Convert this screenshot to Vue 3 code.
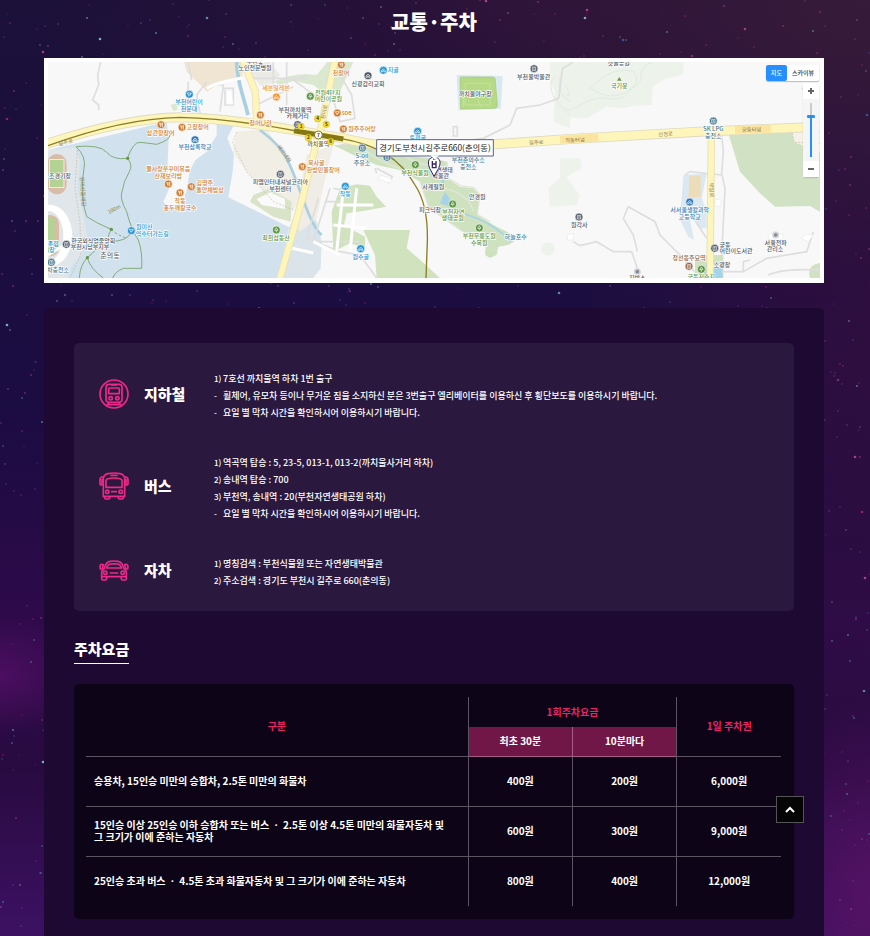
<script setup>
import { ref } from 'vue'

const zoom = ref(76)
const mapType = ref('map')

const guides = [
  {
    id: 'subway',
    title: '지하철',
    lines: [
      ['1)', '7호선 까치울역 하차 1번 출구'],
      ['-', '휠체어, 유모차 등이나 무거운 짐을 소지하신 분은 3번출구 엘리베이터를 이용하신 후 횡단보도를 이용하시기 바랍니다.'],
      ['-', '요일 별 막차 시간을 확인하시어 이용하시기 바랍니다.'],
    ],
  },
  {
    id: 'bus',
    title: '버스',
    lines: [
      ['1)', '역곡역 탑승 : 5, 23-5, 013-1, 013-2(까치울사거리 하차)'],
      ['2)', '송내역 탑승 : 700'],
      ['3)', '부천역, 송내역 : 20(부천자연생태공원 하차)'],
      ['-', '요일 별 막차 시간을 확인하시어 이용하시기 바랍니다.'],
    ],
  },
  {
    id: 'car',
    title: '자차',
    lines: [
      ['1)', '명칭검색 : 부천식물원 또는 자연생태박물관'],
      ['2)', '주소검색 : 경기도 부천시 길주로 660(춘의동)'],
    ],
  },
]

const fees = [
  ['승용차, 15인승 미만의 승합차, 2.5톤 미만의 화물차', '400원', '200원', '6,000원'],
  ['15인승 이상 25인승 이하 승합차 또는 버스 ㆍ 2.5톤 이상 4.5톤 미만의 화물자동차 및 그 크기가 이에 준하는 자동차', '600원', '300원', '9,000원'],
  ['25인승 초과 버스 ㆍ 4.5톤 초과 화물자동차 및 그 크기가 이에 준하는 자동차', '800원', '400원', '12,000원'],
]

// Map labels: x, y (baseline), text, tone
const labels = [
  [645, 28, '부천숲', 'dark'], [645, 46, '노인전문병원', 'dark'],
  [447, 148, '부천어린이', 'blue'], [447, 169, '천문대', 'blue'],
  [362, 240, '삼관향장어', 'food'], [473, 223, '고창장어', 'food'],
  [465, 282, '부천삼록학교', 'school'],
  [385, 348, '쭐사랑쭈꾸미볶음', 'food'], [385, 368, '산재보리밥', 'food'],
  [494, 391, '김명주', 'food'], [510, 411, '돌안채밥상', 'food'],
  [420, 444, '작동', 'food'], [420, 464, '홍두깨칼국수', 'food'],
  [313, 523, '원미산', 'blue'], [337, 543, '약수터가는길', 'blue'],
  [160, 563, '한국외식업중앙회', 'dark'], [150, 583, '부천시남부지부', 'dark'],
  [52, 370, '보조경기장', 'dark'], [40, 572, '종합', 'blue'], [36, 590, '장', 'blue'],
  [54, 651, '차충전소', 'teal'],
  [708, 106, '세븐일레븐', 'orange'], [765, 170, '부천까치울역', 'dark'], [773, 190, '카페거리', 'dark'],
  [662, 210, '장어나라', 'food'],
  [721, 387, '피엠인터내셔널코리아', 'dark'], [721, 408, '부천센터', 'dark'],
  [708, 555, '최희섭동산', 'green'],
  [903, 60, '천장어', 'food'], [1060, 51, '지골', 'blue'], [984, 92, '신광감리교회', 'dark'],
  [863, 119, '전원4단지', 'green'], [865, 138, '어린이공원', 'green'],
  [920, 181, 'soe', 'food'], [966, 228, '원주추어탕', 'food'],
  [835, 272, '까치울역', 'olive'],
  [829, 331, '복사골', 'food'], [850, 351, '한방민물장어', 'food'],
  [966, 310, 'S-oil', 'teal'], [966, 329, '주유소', 'teal'],
  [916, 422, '작동', 'blue'], [962, 612, '원수골', 'blue'],
  [1481, 72, '부천물박물관', 'dark'], [1306, 124, '까치울야구장', 'dark'],
  [1133, 255, '토끼골', 'blue'],
  [1285, 322, '부천춘의수소', 'teal'], [1285, 341, '충전소', 'teal'],
  [1125, 360, '부천식물원', 'green'], [1205, 350, '자연생태', 'park'], [1202, 368, '박물관', 'park'],
  [1180, 401, '사계절원', 'dark'], [1312, 432, '안경원', 'dark'], [1170, 472, '피크닉장', 'dark'],
  [1240, 476, '부천자연', 'green'], [1238, 496, '생태공원', 'green'],
  [1318, 550, '부천무릉도원', 'green'], [1318, 570, '수목원', 'green'],
  [1427, 553, '하늘호수', 'lake'],
  [1736, 29, '갯골공원', 'dark'], [1738, 99, '국기봉', 'green'],
  [2020, 229, 'SK LPG', 'teal'], [2020, 248, '충전소', 'teal'],
  [1949, 471, '서서울생활과학', 'school'], [1949, 491, '고등학교', 'school'],
  [1618, 516, '원각사', 'dark'], [2055, 576, '궁동', 'dark'], [2088, 595, '어린이도서관', 'dark'],
  [2207, 570, '서울전파', 'dark'], [2205, 589, '관리소', 'dark'],
  [1947, 615, '정선옹주묘역', 'brown'], [2046, 637, '소광장', 'dark'], [1984, 672, '궁동저수지', 'green'],
  [1792, 674, '지박스', 'dark'],
]
const roadNames = [
  [78, 268, '길주로', -12], [1489, 268, '길주로', -3], [1605, 261, '작동터널', -2],
  [1877, 243, '신정로', -3], [2135, 230, '궁동터널', -2], [728, 300, '베르네천', 54],
  [225, 468, '100m', -28], [2009, 405, '부일로', 88], [858, 172, '원미로', -76], [123, 410, '원미산둘레길', 86],
]
const pins = [
  [448, 118, 'blue', 'cup'], [363, 209, 'food', 'fork'], [426, 217, 'food', 'fork'], [465, 254, 'school', 'house'],
  [385, 387, 'food', 'fork'], [454, 395, 'food', 'fork'], [420, 413, 'food', 'fork'], [274, 527, 'blue', 'cup'],
  [79, 568, 'dark', 'build'], [34, 622, 'teal', 'build'], [709, 126, 'orange', 'house'], [661, 180, 'food', 'fork'],
  [773, 209, 'dark', 'build'], [721, 358, 'dark', 'build'], [787, 335, 'food', 'fork'], [709, 525, 'green', 'tree'],
  [811, 124, 'green', 'tree'], [904, 29, 'food', 'fork'], [984, 62, 'dark', 'house'], [1030, 46, 'blue', 'house'],
  [892, 174, 'food', 'cup'], [910, 222, 'food', 'fork'], [967, 279, 'teal', 'build'], [1041, 307, 'teal', 'build'],
  [916, 394, 'blue', 'house'], [962, 581, 'blue', 'house'], [1482, 41, 'dark', 'build'], [1133, 229, 'blue', 'house'],
  [1126, 329, 'green', 'tree'], [1238, 447, 'green', 'tree'], [1318, 519, 'green', 'tree'],
  [2020, 198, 'teal', 'build'], [1949, 441, 'school', 'house'], [1617, 486, 'dark', 'build'],
  [2024, 580, 'dark', 'build'], [1947, 634, 'brown', 'build'], [1984, 643, 'green', 'tree'],
]
const glyphs = {
  fork: 'M-4-6V-2Q-4 1-1 1V-6M-1 0V7M4 7V-6Q1-4 4 1',
  house: 'M-6 5V1L0-5L6 1V5H2V1H-2V5Z',
  cup: 'M-6-4H5L3 2H-3ZM-1 2V6M5-3H7',
  build: 'M-5 6V-5H5V6ZM-2-2H2M-2 2H2',
  tree: 'M0-7L5 1H-5ZM0 1V7',
}
const exits = [[783, 214, '1'], [833, 191, '4'], [859, 208, '5'], [805, 248, '2'], [872, 260, '6']]

// Deterministic star field, so that every load draws the same sky
const tones = ['#5f9fc0', '#b7418f', '#8a2d87', '#3f58a5', '#a52465', '#7fd0d8', '#c0499b']
let seed = 41
const rand = () => (seed = (seed * 16807) % 2147483647) / 2147483647
const stars = Array.from({ length: 1500 }, () => {
  const bright = rand() > 0.94
  return {
    x: Math.round(rand() * 870),
    y: Math.round(rand() * 936),
    r: bright ? 1.3 : 0.9,
    o: bright ? 0.85 : 0.2 + rand() * 0.4,
    c: tones[Math.floor(rand() * tones.length)],
  }
})

const toTop = () => window.scrollTo({ top: 0, behavior: 'smooth' })
</script>

<template>
  <div class="page">
    <svg class="sky" viewBox="0 0 870 936" preserveAspectRatio="xMidYMin slice" aria-hidden="true">
      <circle v-for="(s, i) in stars" :key="i" :cx="s.x" :cy="s.y" :r="s.r" :fill="s.c" :opacity="s.o" />
    </svg>

    <h1>교통·주차</h1>

    <section class="map">
      <svg class="map-art" viewBox="24 21 2316 648" role="img" aria-label="지도">
        <rect x="24" y="21" width="2316" height="648" fill="#f8f8f8" />
        <!-- hills and forest -->
        <path fill="#d1e2ee" d="M24 285L380 200 386 250 382 345 388 400 370 440 385 456 425 450 442 400 448 350 466 315 500 290 530 240 530 205 580 212 562 250 582 300 578 350 565 427 748 517 712 669H24Z" />
        <path fill="#e0e6ea" d="M24 285L106 277 120 320 112 400 130 480 140 540 124 600 90 640 82 669H24Z" />
        <path fill="#dbe4ea" d="M748 517L790 430 830 500 845 560 842 640 820 669H712Z" />
        <path fill="#f1eee5" d="M590 230L680 222 735 300 765 380 790 425 760 465 700 440 620 350 578 290Z" />
        <path fill="#d9e3c8" d="M640 420L690 400 720 420 755 440 752 500 700 485 630 440Z" />
        <path fill="#fafafa" d="M650 432L690 412 735 432 735 462 665 450Z" />
        <path fill="#f0e5d2" d="M432 21H608V66L545 82 500 110 480 88 440 50Z" />
        <path fill="#eceae4" d="M600 21H690L720 60 680 100 660 90Z" />
        <path fill="#d9e8cf" d="M700 80Q760 50 830 60L862 21H940L900 110 860 120 820 90 760 78 720 90ZM392 150L412 143V165L400 168Z" />
        <path fill="#f0ede6" d="M800 300L880 270 860 350 830 490 780 530 760 500Z" />
        <path fill="#d1e2bf" d="M950 388L990 392 1010 425 1038 455 970 468 920 475 912 510 975 545 975 580 930 565 880 590 875 470 900 400ZM970 525H1110L1100 580 1135 610 1200 669H1010L1005 600Z" />
        <path fill="#cfe2c0" d="M880 270H1000L1060 300 1180 310 1220 320 1222 370 1260 395 1300 400 1320 420 1312 480 1370 515 1410 535 1440 548 1405 570 1375 575 1370 600 1350 609 1335 600 1338 565 1280 540 1200 480 1165 455 1140 380 1080 345 1010 330 940 300Z" />
        <path fill="#edf3eb" d="M1560 21H1930L1930 60 1880 70 1838 95 1835 150 1780 152 1750 160 1700 155 1640 190 1560 185ZM1560 310L1620 310 1625 340 1580 365 1600 395 1620 420 1610 450 1530 455 1525 400 1560 370Z" />
        <path fill="#edf3eb" d="M1530 21H1590V220L1540 200 1545 110 1530 80Z" />
        <ellipse cx="1524" cy="582" rx="20" ry="20" fill="#edf3eb" />
        <path fill="#d1e2c4" d="M2065 235L2260 228 2292 235 2340 238V470L2310 453 2205 455 2160 415 2100 350Z" />
        <path fill="#f5f1e8" d="M2255 228H2340V290L2262 262Z" />
        <path fill="#d1e2c4" d="M2340 624Q2298 630 2310 669H2340ZM1980 600H2050V669H1965V620Z" />
        <path fill="#dbe8f1" d="M1930 360L2000 355 1985 430 2000 470 2000 520H1980L1965 490 1950 495 1962 555 1945 545 1918 490 1925 430Z" />
        <path fill="#ecdcb9" d="M1948 362H1982V425L1945 428Z" />
        <path fill="#a5d3ea" d="M1998 625H2048V669H1990ZM1200 445L1215 410 1228 430 1230 455ZM1202 370H1215L1208 395ZM1392 540L1440 545 1410 560Z" />
        <path fill="none" stroke="#a5d3ea" stroke-width="5" d="M1235 460Q1280 480 1310 490T1400 545" />
        <path fill="none" stroke="#e1eae0" stroke-width="3" d="M1575 160C1600 180 1640 120 1700 130S1760 110 1790 90 1780 40 1840 21M1650 100Q1710 140 1760 110T1780 50Q1720 30 1650 100M1575 90Q1600 130 1580 120M1550 60Q1500 100 1590 180M1565 50Q1540 110 1590 140" />
        <!-- sports grounds -->
        <rect x="22" y="297" width="58" height="121" rx="29" fill="#d8bca7" />
        <rect x="28" y="314" width="44" height="84" fill="#b4d294" stroke="#fff" stroke-width="2" />
        <path stroke="#fff" stroke-width="2" d="M28 356H72" />
        <ellipse cx="28" cy="542" rx="70" ry="94" fill="#fff" stroke="#dfe3e6" stroke-width="2" />
        <ellipse cx="26" cy="542" rx="44" ry="74" fill="#e1e5e8" />
        <rect x="4" y="480" width="53" height="124" rx="26" fill="#d8bca7" />
        <rect x="8" y="488" width="36" height="104" fill="#b4d294" />
        <path fill="#d8e7f0" d="M1250 60L1388 63 1382 161 1256 166Z" />
        <path fill="#b5d984" stroke="#a0ca73" stroke-width="2" d="M1260 70Q1260 65 1266 66L1360 66Q1368 70 1366 80L1372 150Q1372 160 1362 160L1262 162Z" />
        <path fill="none" stroke="#cfe7ae" stroke-width="2" d="M1275 85H1350V150H1275ZM1270 155V105Q1310 110 1322 155" />
        <!-- creeks -->
        <path fill="none" stroke="#a9cfe0" stroke-width="11" d="M590 21C590 80 610 120 624 180" />
        <path fill="none" stroke="#a9cfe0" stroke-width="8" d="M660 225Q720 270 740 310T790 435 845 540" />
        <!-- lanes -->
        <g fill="none" stroke="#dedede" stroke-width="5">
          <path d="M182 21L173 60 176 90 158 135 176 150 176 166M445 80L440 170M500 80L470 120 480 175M510 90H550L540 170M550 100H580V150H555V105M455 75L445 21M640 70H800M700 21V95M740 21V150M800 60L760 75 850 140M650 150L760 95M860 70L900 200 945 190 935 120 900 60" />
          <path d="M1600 21L1568 40 1556 130 1500 150 1430 160 1410 210 1330 250 1240 262M1240 215H1252V243H1240ZM1010 340L1057 365 1045 385M1010 355L1005 340M900 270L1000 260M835 430L800 550 900 590 960 600 1010 669M870 400L820 560M880 400L930 410M900 440H860M960 560H820" />
          <path d="M1600 560L1620 572 1670 560 1720 590 1775 590 1792 640M1792 590L1780 540 1750 490 1765 455 1845 500 1860 540 1920 600 1980 669M2045 240L2050 290 2045 355 2055 400 2045 600M1935 360L1950 350 2045 360M2045 650H2110L2180 610 2300 590 2320 530M2110 650V620L2130 615M2185 660Q2230 640 2340 645M1960 490L2000 550M2285 100L2310 105" />
          <path stroke="#e2e6da" stroke-width="4" d="M1222 320L1225 370 1262 392 1302 398 1320 420 1312 478 1350 500M1140 380L1165 455 1205 486 1290 545M1080 290Q1110 320 1160 330M1215 400Q1290 420 1300 470M965 275Q1010 320 1080 340" />
        </g>
        <path fill="none" stroke="#fff" stroke-width="9" d="M500 100Q520 85 608 68M910 400L890 590M950 400L930 590M890 450H1000M880 510L980 520M24 600 90 560M820 560L900 600M750 578L820 594" />
        <path fill="#fff" stroke="#e8e8e8" stroke-width="2" d="M2282 550L2300 538 2320 540 2305 560ZM2185 540L2200 530 2230 540 2228 555 2185 552ZM1582 540L1600 535V555H1582ZM2025 432L2045 435 2040 455 2025 453ZM575 105H558V148H580ZM1015 372L1022 360 1058 374 1048 384Z" />
        <!-- trails -->
        <g fill="none" stroke="#83ab7a" stroke-width="3">
          <path d="M108 275Q180 268 200 292T262 310Q280 330 268 350 250 380 246 410 238 430 260 470 272 520 295 555 308 590 305 640L250 640Q225 650 218 669M262 310Q280 260 300 262T350 268Q390 255 390 240M108 275Q140 305 132 340 118 420 140 485 170 505 214 523M142 608Q150 640 190 669M142 608Q120 630 118 669M214 523Q200 545 207 560 175 575 142 608M274 530Q262 562 207 558" />
          <path stroke-dasharray="8 6" d="M214 523Q230 540 262 550" />
        </g>
        <path fill="none" stroke="#bfb596" stroke-width="2" stroke-dasharray="5 5" d="M112 285L105 400 120 500 122 600 90 669M590 232L578 262 620 350 700 440 760 465M2257 235L2262 262 2340 265" />
        <g fill="#64983e"><circle cx="263" cy="310" r="5" /><circle cx="214" cy="523" r="5" /><circle cx="142" cy="608" r="5" /></g>
        <!-- main roads -->
        <g fill="none" stroke-linejoin="round">
          <path stroke="#dfdac2" stroke-width="30" d="M10 270Q250 190 420 187C560 190 700 215 790 230L910 250C980 266 1010 272 1100 274L1360 268 1590 252 1980 230 2350 215" />
          <path stroke="#e7dfb9" stroke-width="22" d="M608 15L646 110 650 195M885 15L845 210 830 260 790 420 717 680M2014 240L2010 680" />
          <path stroke="#fdf5b9" stroke-width="17" d="M608 15L646 110 650 205M885 15L845 210 830 260 790 420 717 680M2014 240L2010 680" />
          <path stroke="#fdf5b9" stroke-width="25" d="M10 270Q250 190 420 187C560 190 700 215 790 230L910 250C980 266 1010 272 1100 274L1360 268 1590 252 1980 230 2350 215" />
          <path stroke="#fbe49f" stroke-width="23" d="M1560 254L1675 248M2085 225L2192 221" />
          <path stroke="#8b7d20" stroke-width="4" d="M24 272Q250 190 420 187C560 190 700 215 770 228M900 250C1010 268 1080 310 1125 390Q1165 450 1162 560L1158 669" />
          <path stroke="#857713" stroke-width="15" d="M762 227L910 252" />
        </g>
        <!-- road names -->
        <g class="road-names">
          <text v-for="r in roadNames" :key="r[2] + r[0]" :transform="`translate(${r[0]} ${r[1]}) rotate(${r[3]})`">{{ r[2] }}</text>
        </g>
        <!-- places -->
        <g v-for="(p, i) in pins" :key="'p' + i" :class="p[2]" :transform="`translate(${p[0]} ${p[1]})`">
          <circle r="12" stroke="#fff" stroke-width="2" />
          <path class="glyph" :d="glyphs[p[3]]" />
        </g>
        <g fill="#858b90" stroke="#d0d3d6" stroke-width="5"><circle cx="2207" cy="540" r="8" /><circle cx="1792" cy="650" r="8" /></g>
        <path fill="#6b9a45" d="M1738 66L1745 77H1731Z" />
        <g class="labels">
          <text v-for="(l, i) in labels" :key="'l' + i" :class="l[3]" :x="l[0]" :y="l[1]">{{ l[2] }}</text>
          <text class="dong" x="210" y="609">춘의동</text>
        </g>
        <g class="exits">
          <g v-for="e in exits" :key="e[2]">
            <circle :cx="e[0]" :cy="e[1]" r="10" />
            <text :x="e[0]" :y="e[1] + 5">{{ e[2] }}</text>
          </g>
          <circle class="line-seven" cx="835" cy="240" r="12" />
          <text x="835" y="246">7</text>
        </g>
        <!-- destination -->
        <path fill="#fff" stroke="#35246b" stroke-width="3" d="M1182 364L1169 340Q1160 317 1172 309 1182 302 1193 309 1206 317 1196 340Z" />
        <path fill="none" stroke="#35246b" stroke-width="4" d="M1177 318V338H1188V318M1177 327H1188M1179 312H1186" />
        <path fill="#fff" stroke="#55618f" stroke-width="3" d="M1010 254H1360V303H1010Z" />
        <path fill="#fff" d="M1171 301H1197L1184 314Z" />
        <text class="address" x="1185" y="289">경기도부천시길주로660(춘의동)</text>
      </svg>

      <div class="map-type">
        <button type="button" :class="{ active: mapType === 'map' }" @click="mapType = 'map'">지도</button>
        <button type="button" :class="{ active: mapType === 'sky' }" @click="mapType = 'sky'">스카이뷰</button>
      </div>
      <div class="map-zoom">
        <button type="button" aria-label="확대" @click="zoom = Math.min(100, +zoom + 8)">
          <svg viewBox="0 0 8 8"><path d="M1 4H7M4 1V7" /></svg>
        </button>
        <input v-model="zoom" type="range" min="0" max="100" aria-label="지도 확대 수준" />
        <button type="button" aria-label="축소" @click="zoom = Math.max(0, +zoom - 8)">
          <svg viewBox="0 0 8 8"><path d="M1 4H7" /></svg>
        </button>
      </div>
    </section>

    <main class="panel">
      <section class="guides">
        <article v-for="g in guides" :key="g.id" class="guide">
          <div class="guide-head">
            <svg v-if="g.id === 'subway'" class="icon" viewBox="0 0 90 90">
              <circle cx="45" cy="45" r="42" />
              <rect x="21" y="16" width="48" height="54" rx="9" />
              <rect x="29" y="27" width="32" height="17" rx="2" />
              <circle cx="35" cy="58" r="5" /><circle cx="55" cy="58" r="5" />
              <path d="M36 18H54M30 71L22 81M60 71L68 81M27 77H63" />
            </svg>
            <svg v-else-if="g.id === 'bus'" class="icon" viewBox="0 0 90 84">
              <path d="M13 73V19Q14 8 27 5 45 1 63 5 76 8 77 19V73ZM21 46V25Q22 18 45 18T69 25V46ZM34 10H56M36 59H54" />
              <path d="M13 15H8Q3 16 3 23V35Q3 39 6 39H9V23H13M77 15H82Q87 16 87 23V35Q87 39 84 39H81V23H77" />
              <path d="M17 73V78Q17 81 20 81H29Q32 81 32 78V73M58 73V78Q58 81 61 81H70Q73 81 73 78V73" />
              <circle cx="25" cy="59" r="5" /><circle cx="65" cy="59" r="5" />
            </svg>
            <svg v-else class="icon" viewBox="0 0 90 63">
              <path d="M16 25Q20 6 33 4 45 2 57 4 70 6 74 25M23 24Q25 14 34 12 45 11 56 12 65 14 67 24ZM16 25L8 35V50H82V35L74 25M32 39H58" />
              <path d="M13 14Q4 11 3 19L4 27H10ZM77 14Q86 11 87 19L86 27H80Z" />
              <path d="M8 50V57Q8 60 11 60H20Q23 60 23 57V50M67 50V57Q67 60 70 60H79Q82 60 82 57V50" />
              <circle cx="19" cy="38" r="5" /><circle cx="71" cy="38" r="5" />
            </svg>
            <h2>{{ g.title }}</h2>
          </div>
          <ul>
            <li v-for="(line, i) in g.lines" :key="i"><span class="marker">{{ line[0] }}</span><span>{{ line[1] }}</span></li>
          </ul>
        </article>
      </section>

      <h2 class="fee-title">주차요금</h2>
      <div class="fees">
        <table>
          <colgroup><col class="kind" /><col /><col /><col /></colgroup>
          <thead>
            <tr>
              <th rowspan="2" scope="col">구분</th>
              <th colspan="2" scope="colgroup">1회주차요금</th>
              <th rowspan="2" scope="col">1일 주차권</th>
            </tr>
            <tr class="sub">
              <th scope="col">최초 30분</th>
              <th scope="col">10분마다</th>
            </tr>
          </thead>
          <tbody>
            <tr v-for="row in fees" :key="row[0]">
              <td v-for="(cell, i) in row" :key="i">{{ cell }}</td>
            </tr>
          </tbody>
        </table>
      </div>
    </main>

    <button class="to-top" type="button" aria-label="맨 위로" @click="toTop">
      <svg viewBox="0 0 10 7"><path d="M1 6L5 2L9 6" /></svg>
    </button>
  </div>
</template>

<style>
body {
  margin: 0;
  background: #1e0b3c;
}
</style>

<style scoped>
* {
  box-sizing: border-box;
}
.page {
  position: relative;
  display: flex;
  flex-direction: column;
  min-height: 100vh;
  padding: 10px 46px 0 44px;
  overflow: hidden;
  color: #fff;
  font-family: "Noto Sans CJK KR", "Noto Sans", sans-serif;
  background:
    radial-gradient(ellipse 90px 60px at 0 675px, #4c0e61 0%, transparent 100%),
    radial-gradient(ellipse 120px 200px at 100% 900px, #531263 0%, transparent 100%),
    radial-gradient(ellipse 500px 300px at 100% 0, #371b39 0%, transparent 100%),
    radial-gradient(ellipse 300px 500px at 100% 350px, #2f0e3f 0%, transparent 100%),
    radial-gradient(ellipse 500px 200px at 60% 0, #2b1138 0%, transparent 100%),
    linear-gradient(#1b1139 0, #1b0c42 400px, #240b45 520px, #2f0a4b 620px, #290a40 770px, #3c1163 936px);
}
.sky {
  position: absolute;
  inset: 0;
  width: 100%;
  height: 100%;
}
h1,
h2,
ul {
  margin: 0;
  padding: 0;
}
h1 {
  position: relative;
  margin-bottom: 24px;
  font-size: 20px;
  font-weight: 900;
  line-height: 24px;
  text-align: center;
}
.map {
  position: relative;
  padding: 4px 4px 5px;
  background: #fff;
}
.map-art {
  display: block;
  width: 100%;
}
.map-art text {
  text-anchor: middle;
}
.labels text {
  font-size: 18px;
  font-weight: 500;
  stroke: #fff;
  stroke-width: 4px;
  stroke-linejoin: round;
  paint-order: stroke;
}
.labels .dong {
  fill: #666;
  font-size: 21px;
}
.road-names text {
  fill: #8d8052;
  font-size: 16px;
}
.glyph {
  fill: none;
  stroke: #fff;
  stroke-width: 2px;
}
.dark { fill: #4e5966; }
.blue { fill: #2492d5; }
.food { fill: #cf7b2c; }
.orange { fill: #f29434; }
.school { fill: #3478b8; }
.teal { fill: #45778f; }
.green { fill: #58943e; }
.olive { fill: #6f6513; }
.brown { fill: #936342; }
.park { fill: #555a7a; }
.lake { fill: #2f7fa3; }
.exits circle {
  fill: #f4dc2c;
  stroke: #b7a327;
}
.exits text {
  fill: #333;
  font-size: 14px;
  font-weight: 700;
}
.exits .line-seven {
  fill: #fff;
  stroke: #857713;
  stroke-width: 3px;
}
.address {
  fill: #222;
  font-size: 25px;
}
button {
  padding: 0;
  border: 0;
  font-family: inherit;
  cursor: pointer;
}
.map-type {
  position: absolute;
  top: 7px;
  right: 5px;
  display: flex;
  background: #fff;
  border-radius: 2px;
  box-shadow: 0 1px 1px #bbb;
}
.map-type button {
  height: 16px;
  padding: 0 5px;
  border-radius: 2px;
  background: transparent;
  color: #333;
  font-size: 6px;
  font-weight: 500;
  line-height: 16px;
}
.map-type .active {
  background: #258fff;
  color: #fff;
}
.map-zoom {
  position: absolute;
  top: 25px;
  right: 5px;
  display: flex;
  flex-direction: column;
  align-items: center;
  width: 16px;
  background: #f5f5f5;
  border-radius: 2px;
  box-shadow: 0 1px 1px #bbb;
}
.map-zoom button {
  display: grid;
  place-items: center;
  width: 16px;
  height: 16px;
  background: #fff;
}
.map-zoom svg {
  width: 8px;
  fill: none;
  stroke: #666;
  stroke-width: 2px;
}
.map-zoom input {
  width: 8px;
  height: 54px;
  margin: 4px 0;
  appearance: none;
  background: transparent;
  writing-mode: vertical-lr;
  direction: rtl;
}
.map-zoom input::-webkit-slider-runnable-track {
  width: 2px;
  height: 54px;
  background: linear-gradient(#ccc 24%, #258fff 24%);
}
.map-zoom input::-webkit-slider-thumb {
  width: 8px;
  height: 3px;
  margin-left: -3px;
  appearance: none;
  border-radius: 1px;
  background: #258fff;
}
.panel {
  position: relative;
  flex: 1;
  margin-top: 25px;
  padding: 35px 30px 17px;
  border-radius: 5px 5px 0 0;
  background: #1e0932;
}
.guides {
  display: flex;
  flex-direction: column;
  gap: 33px;
  padding: 27px 25px 22px;
  border-radius: 5px;
  background: #2a183e;
}
.guide {
  display: grid;
  grid-template-columns: 115px 1fr;
  align-items: center;
}
.guide-head {
  display: flex;
  align-items: center;
  gap: 15px;
  padding-bottom: 4px;
}
.icon {
  width: 30px;
  fill: none;
  stroke: #ee2888;
  stroke-width: 5px;
}
.guide h2,
.fee-title {
  font-size: 15px;
  font-weight: 900;
  line-height: 22px;
}
ul {
  list-style: none;
}
li {
  display: grid;
  grid-template-columns: 9px 1fr;
  color: #fff;
  font-size: 9px;
  font-weight: 500;
  line-height: 17px;
}
.marker {
  font-size: 8px;
}
.fee-title {
  width: fit-content;
  margin: 27px 0 20px;
  padding-bottom: 3px;
  border-bottom: 1px solid #fff;
}
.fees {
  padding: 13px 13px 13px 12px;
  border-radius: 5px;
  background: #0d0417;
}
table {
  width: 100%;
  border-collapse: collapse;
  table-layout: fixed;
  font-size: 10px;
  font-weight: 700;
  line-height: 12px;
}
.kind {
  width: 55%;
}
th,
td {
  height: 50px;
  padding: 0 8px;
  border: 1px solid #5d5662;
  text-align: center;
}
th {
  height: 30px;
  color: #ef216c;
}
thead tr:first-child th {
  border-top: 0;
}
th[colspan] {
  border-bottom: 0;
}
.sub th {
  height: 29px;
  border-color: #a65d84;
  border-top: 0;
  background: #711748;
  color: #fff;
}
th:first-child[rowspan],
td:first-child {
  border-left: 0;
}
td:first-child {
  padding-right: 16px;
  text-align: left;
}
th:last-child[rowspan],
td:last-child {
  border-right: 0;
}
tbody tr:last-child td {
  border-bottom: 0;
}
.to-top {
  position: fixed;
  right: 66px;
  bottom: 113px;
  display: grid;
  place-items: center;
  width: 28px;
  height: 27px;
  border: 1px solid #555;
  background: #050505;
}
.to-top svg {
  width: 10px;
  fill: none;
  stroke: #fff;
  stroke-width: 2px;
}
</style>
